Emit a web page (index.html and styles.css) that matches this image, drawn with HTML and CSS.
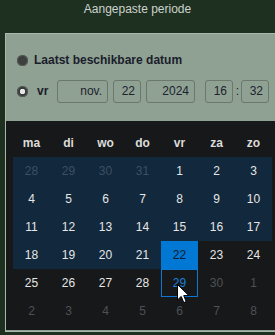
FILE: index.html
```html
<!DOCTYPE html>
<html lang="nl">
<head>
  <meta charset="UTF-8">
  <title>Aangepaste periode</title>
  <link rel="stylesheet" href="styles.css">
</head>
<body>

  <div class="titel">Aangepaste periode</div>

  <div class="paneel">
    <div class="optie">
      <span class="radio"></span>
      <span class="label">Laatst beschikbare datum</span>
    </div>
    <div class="optie optie-datum">
      <span class="radio gekozen"></span>
      <span class="label dag">vr</span>
      <span class="veld maand">nov.</span>
      <span class="veld nummer">22</span>
      <span class="veld jaar">2024</span>
      <span class="veld nummer uur">16</span>
      <span class="dubbelpunt">:</span>
      <span class="veld nummer">32</span>
    </div>

    <div class="kalender">
      <div class="raster" id="raster">
        <div class="kop">ma</div><div class="kop">di</div><div class="kop">wo</div><div class="kop">do</div>
        <div class="kop">vr</div><div class="kop">za</div><div class="kop">zo</div>
      </div>
      <svg class="cursor" width="13" height="20" viewBox="0 0 13 20">
        <path d="M0.5 0.5 L0.5 16 L4.2 12.4 L6.8 18.6 L9.2 17.6 L6.7 11.6 L11.8 11.6 Z" fill="#fff" stroke="#000" stroke-width="1"/>
      </svg>
    </div>
  </div>

  <script>
    // 28 okt t/m 8 dec, periode loopt tot vr 22 nov, na 29 nov niet kiesbaar
    const raster = document.getElementById('raster');
    const dagen = [
      [28, 'ander'], [29, 'ander'], [30, 'ander'], [31, 'ander']
    ];
    for (let d = 1; d <= 30; d++) dagen.push([d, d > 29 ? 'ander' : '']);
    for (let d = 1; d <= 8; d++) dagen.push([d, 'ander']);

    dagen.forEach(([dag, soort], i) => {
      const cel = document.createElement('div');
      cel.className = 'dag-cel';
      if (soort) cel.classList.add(soort);
      if (i < 25) cel.classList.add('bereik');
      if (i === 25) cel.classList.add('gekozen');
      if (i === 32) cel.classList.add('focus');
      cel.textContent = dag;
      raster.appendChild(cel);
    });
  </script>

</body>
</html>
```

FILE: styles.css
```css
* { margin: 0; padding: 0; box-sizing: border-box; }
body { font-family: 'Liberation Sans', Arial, sans-serif; font-size: 12px; background: #1e3120; overflow: hidden; }

.titel { height: 33px; padding-top: 2px; text-align: center; color: #cdd2cd; font-size: 12px; }

.paneel { margin-left: 5px; height: 299px; background: #8fa192; border: 1px solid #a9b8aa; border-right: none; padding-top: 14px; }

.optie { display: flex; align-items: center; height: 24px; padding-left: 11px; }
.optie-datum { margin-top: 7px; }
.radio { width: 11px; height: 11px; border-radius: 50%; background: #3d3f3f; box-shadow: inset 0 0 0 1px #555a58; flex-shrink: 0; }
.radio.gekozen { background: radial-gradient(circle, #e6e6e6 0 2.5px, #3b3d3d 3px); }
.label { margin-left: 6px; font-weight: bold; color: #1b1d2c; }
.dag { margin-left: 9px; width: 20px; }

.veld { height: 23px; border: 1px solid #6b786d; border-radius: 3px; display: flex; align-items: center; justify-content: flex-end; padding-right: 5px; color: #1d2230; font-size: 12px; }
.maand { width: 51px; margin-left: 0; }
.nummer { width: 28px; margin-left: 5px; }
.jaar { width: 49px; margin-left: 5px; }
.uur { margin-left: 10px; }
.dubbelpunt { width: 7px; text-align: center; color: #1d2230; margin-left: 1px; }
.dubbelpunt + .veld { margin-left: 0; }

.kalender { position: relative; margin-top: 18px; height: 209px; background: #16181a; padding: 8px 0 0 7px; }
.raster { display: grid; grid-template-columns: repeat(7, 37px); grid-auto-rows: 28px; }
.kop { display: flex; align-items: center; justify-content: center; font-weight: bold; color: #dcdcdc; }
.dag-cel { display: flex; align-items: center; justify-content: center; color: #e6e6e6; }
.dag-cel.ander { color: #4e5256; }
.dag-cel.bereik { background: #12283c; }
.dag-cel.bereik.ander { color: #3b5064; }
.dag-cel.gekozen { background: #0078d4; color: #0f1a2a; }
.dag-cel.focus { border: 1px solid #0a78d4; color: #1a80d8; }

.cursor { position: absolute; left: 171px; top: 163px; }
```
